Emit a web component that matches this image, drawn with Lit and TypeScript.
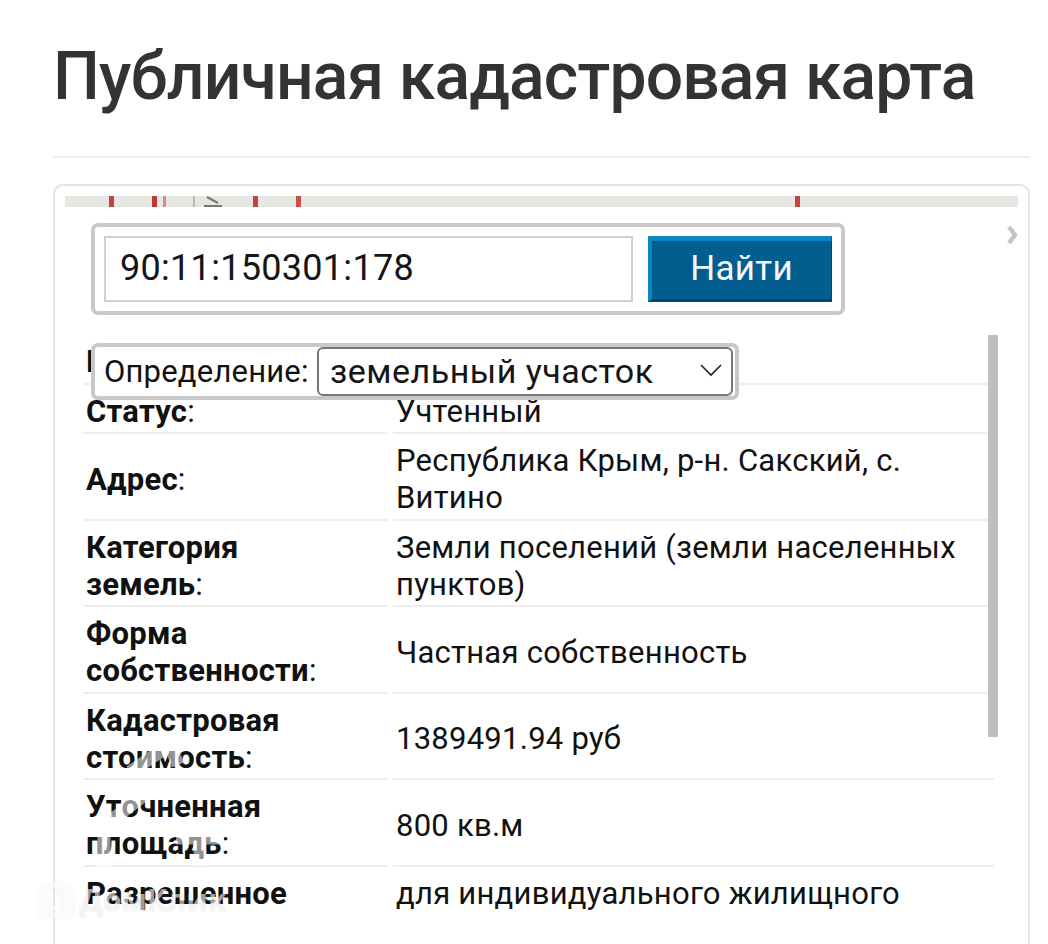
import { LitElement, html, css } from "lit";
import { customElement } from "lit/decorators.js";

const rows: [string, string][] = [
  ["Кад. номер:", ""],
  ["Статус:", "Учтенный"],
  ["Адрес:", "Республика Крым, р-н. Сакский, с. Витино"],
  ["Категория земель:", "Земли поселений (земли населенных пунктов)"],
  ["Форма собственности:", "Частная собственность"],
  ["Кадастровая стоимость:", "1389491.94 руб"],
  ["Уточненная площадь:", "800 кв.м"],
  ["Разрешенное", "для индивидуального жилищного"],
];
const marks: [number, number, string][] = [
  [44, 5, "#c8403f"], [87, 5, "#b83a3a"], [98, 3, "#d98a88"], [128, 2, "#b9b9b6"],
  [188, 5, "#c8403f"], [231, 5, "#c8504e"], [730, 5, "#c8403f"],
];

@customElement("app-root")
export class AppRoot extends LitElement {
  static styles = css`
    :host { display: block; height: 944px; overflow: hidden; background: #fff; position: relative; font-family: Roboto, "Noto Sans", sans-serif; color: #111; }
    .page { padding: 0 18px 0 53px; }
    h1 { margin: 0; padding: 35px 0 38px 0; font: 500 66px/83px Roboto, sans-serif; letter-spacing: -0.85px; color: #333; white-space: nowrap; }
    hr { margin: 0; border: 0; border-top: 2px solid #eeeeee; }
    .card { position: relative; margin-top: 26px; height: 800px; border: 2px solid #e3e3e3; border-radius: 10px; padding: 10px 10px; }
    .strip { position: relative; height: 11px; background: #e6e6e2; }
    .mark { position: absolute; top: 0; height: 11px; }
    .swoosh { position: absolute; left: 139px; top: 0; }
    .table { margin: 128px 23px 0 18px; }
    .row { display: grid; grid-template-columns: 305px 601px; column-gap: 5px; }
    .cell { display: flex; align-items: center; padding: 8px 3px 2.5px; font-size: 31px; line-height: 37px; letter-spacing: 0.25px; border-bottom: 2px solid #eeeeee; }
    .row:last-child .cell { border-bottom: 0; }
    .cell.k { padding-right: 30px; }
    .cell.k b { font-weight: 700; }
    .k span { display: block; }
    .sb { position: absolute; left: 933px; top: 149px; width: 10px; height: 402px; background: #bfbfbf; }
    .chev { position: absolute; left: 952px; top: 39px; }
    .panel { position: absolute; box-sizing: border-box; background: #fff; border: 4px solid #c8c8c8; border-radius: 7px; display: flex; }
    .search { left: 36px; top: 37px; width: 754px; height: 92px; padding: 9px 9px 9px 9px; gap: 15px; }
    .input { box-sizing: border-box; width: 530px; height: 66px; border: 2px solid #cfcfcf; padding-left: 14px; font-size: 36px; line-height: 61px; letter-spacing: 0.3px; color: #151515; }
    .btn { box-sizing: border-box; width: 184px; height: 66px; background: #035e8f; border-top: 5px solid #0a86c4; border-left: 4px solid #0a86c4; border-bottom: 3px solid #04486e; border-right: 1px solid #04486e; color: #f2f7fa; font-size: 35px; line-height: 55px; text-align: center; letter-spacing: 0.3px; }
    .def { left: 36px; top: 157px; width: 648px; height: 57px; padding: 0 2px 1px 9px; align-items: center; }
    .def .lab { font-size: 31px; letter-spacing: 0.2px; width: 213px; flex: none; padding-top: 1px; }
    .sel { box-sizing: border-box; position: relative; width: 416px; height: 49px; border: 2px solid #777; border-radius: 6px; padding-left: 11px; font-size: 34px; line-height: 44px; letter-spacing: 0.5px; color: #151515; }
    .sel svg { position: absolute; right: 9px; top: 15px; }
    .wm { position: absolute; left: 38px; top: 880px; display: flex; align-items: center; gap: 6px; color: rgba(255,255,255,0.6); font: 700 30px/40px "Open Sans", sans-serif; text-shadow: 0 0 2px rgba(0,0,0,0.12); }
    .wm svg { filter: drop-shadow(0 0 1px rgba(0,0,0,0.1)); }
    .wm-big { position: absolute; left: 0; top: 0; pointer-events: none; }
  `;

  render() {
    return html`
      <div class="page">
        <h1>Публичная кадастровая карта</h1>
        <hr />
        <div class="card">
          <div class="strip">
            ${marks.map(([x, w, c]) => html`<div class="mark" style="left:${x}px;width:${w}px;background:${c}"></div>`)}
            <svg class="swoosh" width="22" height="11" viewBox="0 0 22 11"><path d="M3 1 L14 7 M0 10 H18" stroke="#77776f" stroke-width="2" fill="none"/></svg>
          </div>
          <div class="table">
            ${rows.map(([k, v]) => {
              const colon = k.endsWith(":");
              const name = colon ? k.slice(0, -1) : k;
              return html`<div class="row">
                <div class="cell k"><span><b>${name}</b>${colon ? ":" : ""}</span></div>
                <div class="cell">${v}</div>
              </div>`;
            })}
          </div>
          <div class="sb"></div>
          <svg class="chev" width="10" height="20" viewBox="0 0 10 20"><path d="M2 2 L8 10 L2 18" stroke="#c4c4c4" stroke-width="4.5" fill="none"/></svg>
          <div class="panel search">
            <div class="input">90:11:150301:178</div>
            <div class="btn">Найти</div>
          </div>
          <div class="panel def">
            <div class="lab">Определение:</div>
            <div class="sel">земельный участок
              <svg width="22" height="13" viewBox="0 0 22 13"><path d="M1 1 L11 11 L21 1" stroke="#222" stroke-width="1.6" fill="none"/></svg>
            </div>
          </div>
        </div>
      </div>
      <svg class="wm-big" width="1048" height="944" viewBox="0 0 1048 944">
        <path d="M104 868 V826 L148 792 M130 772 L170 745 L178 765 M176 838 L224 838 M200 826 V866" stroke="rgba(255,255,255,0.55)" stroke-width="13" fill="none"/>
      </svg>
      <div class="wm">
        <svg width="36" height="38" viewBox="0 0 36 38"><path d="M18 2 L34 13 V34 H2 V13 Z M10 17 V27 H18 M18 10 L26 16 V30" stroke="rgba(255,255,255,0.7)" stroke-width="5" fill="none"/></svg>
        <span>ДомКлик</span>
      </div>
    `;
  }
}
